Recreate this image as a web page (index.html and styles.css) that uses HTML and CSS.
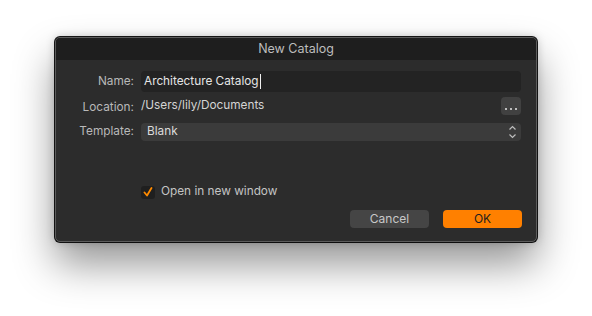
FILE: index.html
```html
<!DOCTYPE html>
<html lang="en">
  <head>
    <meta charset="utf-8" />
    <link rel="stylesheet" href="styles.css">
  </head>
  <body>
    <section class="dialog">
      <header class="titlebar">New Catalog</header>
      <div class="content">
        <div class="form">
          <label class="label label-name" for="name">Name:</label>
          <div class="field"><span id="name">Architecture Catalog</span><span class="caret"></span></div>

          <span class="label label-loc">Location:</span>
          <div class="location">
            <span class="path">/Users/lily/Documents</span>
            <button class="browse">
              <svg width="12" height="3" viewBox="0 0 12 3">
                <rect x="0" y="0" width="2" height="2" fill="#bdbdbd"/>
                <rect x="5" y="0" width="2" height="2" fill="#bdbdbd"/>
                <rect x="10" y="0" width="2" height="2" fill="#bdbdbd"/>
              </svg>
            </button>
          </div>

          <span class="label label-tpl">Template:</span>
          <div class="popup">
            <span class="popup-text">Blank</span>
            <svg class="chevrons" width="9" height="14" viewBox="0 0 9 14">
              <path d="M1.5 4.5 L4.5 1.5 L7.5 4.5" fill="none" stroke="#bdbdbd" stroke-width="1.2"/>
              <path d="M1.5 9.5 L4.5 12.5 L7.5 9.5" fill="none" stroke="#bdbdbd" stroke-width="1.2"/>
            </svg>
          </div>
        </div>

        <label class="check">
          <span class="box">
            <svg width="10" height="10" viewBox="0 0 10 10">
              <path d="M1.5 5.5 L4 8.5 L8.5 1" fill="none" stroke="#ff8a00" stroke-width="1.8" stroke-linecap="round" stroke-linejoin="round"/>
            </svg>
          </span>
          <span class="check-text">Open in new window</span>
        </label>

        <div class="buttons">
          <button class="btn btn-cancel">Cancel</button>
          <button class="btn btn-ok">OK</button>
        </div>
      </div>
    </section>
  </body>
</html>
```

FILE: styles.css
```css
html, body {
  height: 100%;
}

body {
  margin: 0;
  min-height: 316px;
  background: #ffffff;
  font-family: Inter, "Liberation Sans", Arial, sans-serif;
  font-size: 11.8px;
  overflow: hidden;
}

.dialog {
  margin: 37px 0 0 55px;
  width: 480px;
  height: 203px;
  background: #2c2c2c;
  border: 1px solid #5c5c5c;
  border-radius: 5px;
  overflow: hidden;
  box-shadow: 0 22px 40px rgba(0, 0, 0, 0.42), 0 0 10px rgba(0, 0, 0, 0.22), 0 0 0 1px #1a1a1a;
  display: flex;
  flex-direction: column;
}

.titlebar {
  height: 22px;
  background: #1e1e1e;
  color: #bdbdbd;
  font-size: 12.5px;
  text-align: center;
  line-height: 22px;
}

.content {
  flex: 1;
  display: flex;
  flex-direction: column;
  padding: 11px 15px 13px 0;
}

.form {
  display: grid;
  grid-template-columns: 78px 1fr;
  column-gap: 7px;
  row-gap: 6px;
  align-items: center;
  color: #c4c4c4;
}

.label {
  text-align: right;
  color: #b9b9b9;
  line-height: 14px;
  padding-bottom: 2px;
}

.field {
  height: 21px;
  background: #232323;
  border-radius: 4px;
  color: #e6e6e6;
  display: flex;
  align-items: center;
  padding: 0 0 1px 3px;
  box-sizing: border-box;
}

.caret {
  width: 1px;
  height: 15px;
  background: #f0f0f0;
  margin-left: 1px;
}

.location {
  display: flex;
  align-items: center;
  justify-content: space-between;
  color: #d4d4d4;
  margin-top: -1px;
  margin-bottom: 2px;
}

.path {
  line-height: 14px;
  padding-bottom: 2px;
}

.browse {
  width: 20px;
  height: 18px;
  border: none;
  border-radius: 4px;
  background: #414141;
  padding: 6px 0 0;
  display: flex;
  justify-content: center;
  align-items: center;
}

.popup {
  height: 18px;
  background: #3b3b3b;
  border-radius: 4px;
  color: #dcdcdc;
  display: flex;
  align-items: center;
  justify-content: space-between;
  padding: 0 4px 0 6px;
}

.popup-text {
  line-height: 14px;
  padding-bottom: 2px;
}

.check {
  display: flex;
  align-items: center;
  gap: 6px;
  margin: 43px 0 0 85px;
  color: #c4c4c4;
}

.check-text {
  line-height: 14px;
  padding-bottom: 2px;
}

.box {
  width: 14px;
  height: 13px;
  background: #1f1f1f;
  border-radius: 3px;
  display: flex;
  align-items: center;
  justify-content: center;
}

.buttons {
  display: flex;
  justify-content: flex-end;
  gap: 14px;
  margin-top: auto;
  margin-right: -1px;
}

.btn {
  width: 79px;
  height: 18px;
  border: none;
  border-radius: 4px;
  font-family: inherit;
  font-size: 12px;
  padding: 0 0 2px;
}

.btn-cancel {
  background: #454545;
  color: #c8c8c8;
}

.btn-ok {
  background: #ff8000;
  color: #1e1e1e;
}
```
